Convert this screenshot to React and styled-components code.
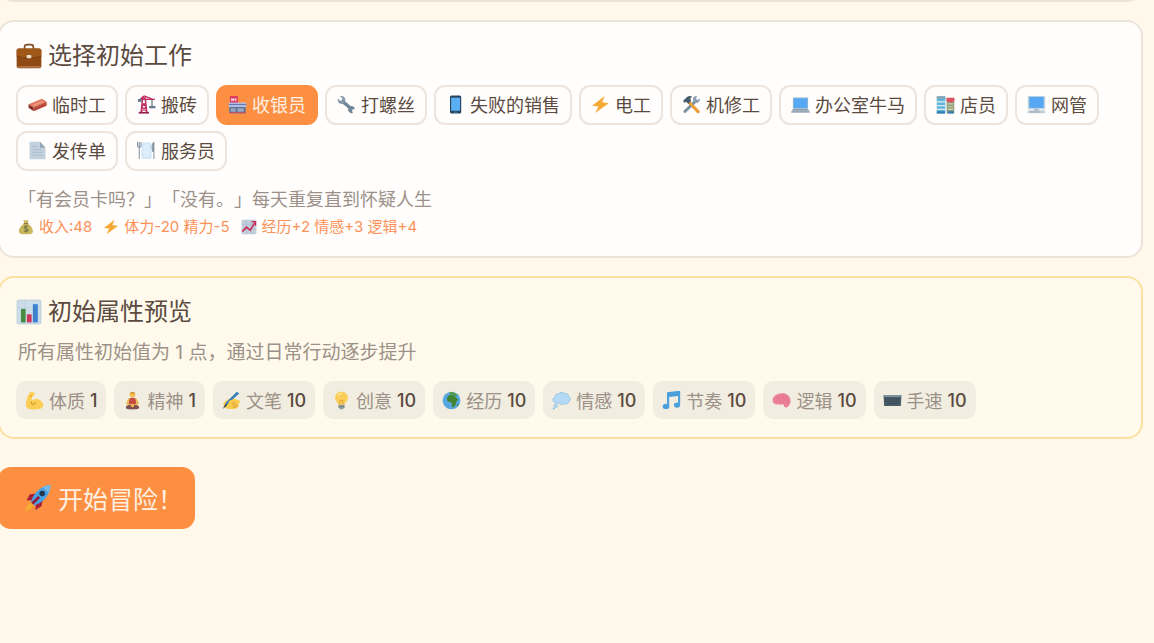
import React, { useState } from "react";
import styled, { createGlobalStyle } from "styled-components";

// every drawing sits on a 20 x 20 grid
const icons = {
    briefcase: (
        <>
            <path d="M6.6 5V3.2C6.6 1.9 7.4 1.2 8.6 1.2h2.8c1.2 0 2 .7 2 2V5" fill="none" stroke="#7d4a23" strokeWidth="1.3" />
            <rect x="0.5" y="4.2" width="19" height="15.2" rx="1.6" fill="#8f4a14" />
            <path d="M.5 5.8C.5 4.9 1.2 4.2 2.1 4.2h15.8c.9 0 1.6.7 1.6 1.6v4.4L12 11.4H8L.5 10.2z" fill="#a05818" />
            <path d="M.5 10.3 8 11.5h4l7.5-1.2" fill="none" stroke="#7c4012" strokeWidth=".6" />
            <rect x="8.2" y="9.3" width="3.6" height="2.4" rx=".5" fill="#e9dccb" />
            <path d="M1 18.4h18" stroke="#c98d62" strokeWidth=".8" />
        </>
    ),
    brick: (
        <>
            <path d="M.6 9.8 14.6 4 19.6 7.2 6 13.2z" fill="#e0785f" />
            <path d="M.6 9.8 6 13.2V17.2L.6 13.4z" fill="#8c2f2a" />
            <path d="M6 13.2 19.6 7.2v4L6 17.2z" fill="#b9483a" />
            <path d="M4.6 10.2 14.4 6.2l2 1.2-9.8 4.2z" fill="#ee9a80" />
        </>
    ),
    crane: (
        <>
            <path d="M4.2 18.6 6 3h2.6l1.8 15.6M5.4 8.4l4 3.6M9.2 8.4 5 12M5 12.8l5.2 4.4M9.8 12.8l-5.4 4.4M3.4 4.6h15.4M7.4 1l9.2 3.6M7.4 1 3.4 4.6" fill="none" stroke="#c22e62" strokeWidth="1.5" />
            <rect x="1.8" y="17.8" width="10.8" height="1.8" fill="#8f2550" />
            <path d="M15.8 5v7" stroke="#526476" strokeWidth="1.2" />
            <rect x="12.8" y="11.6" width="6.6" height="2.4" fill="#66798a" />
            <path d="M1 4.2h4v3H1z" fill="#66798a" />
        </>
    ),
    store: (
        <>
            <rect x="2" y="1" width="8.4" height="8" rx=".6" fill="#df3a62" />
            <path d="M4 3.4v3M4 5h2.2M8.2 3.4v3M6.2 3.4v3" stroke="#fff" strokeWidth="1" />
            <path d="M1.4 9h17.2v10.4H1.4z" fill="#5f7192" />
            <path d="M.8 8h18.4v4.6H.8z" fill="#b9c8ea" />
            <path d="M.8 10h18.4" stroke="#6577b4" strokeWidth="1.4" />
            <path d="M3 14h5v3.6H3zM10 14h6.6v3.6H10z" fill="#96a9c4" />
            <path d="M1.4 18.4h17.2" stroke="#cf4c63" strokeWidth="1" />
        </>
    ),
    wrench: (
        <>
            <path d="M5.4 6.4 14.8 14.2" stroke="#74889a" strokeWidth="3.6" />
            <path d="M3.2 1.2 5.8 3.6 5.2 5.6 3.2 6 .8 3.8C.2 6.4 1.4 8.6 3.6 9.2c2.6.7 5.4-1.4 5.2-4.2C8.7 2.4 6 .4 3.2 1.2z" fill="#8497a8" />
            <path d="M18.9 14.6 16.6 15.2 15.8 16.6 16.8 18.9C14.4 19.6 12 18.2 11.6 15.8c-.3-2.2 1.4-4.2 3.6-4.2 1.8 0 3.3 1.2 3.7 3z" fill="#74889a" />
        </>
    ),
    phone: (
        <>
            <rect x="4.2" y=".6" width="11.8" height="18.8" rx="1.6" fill="#26445f" />
            <rect x="5.4" y="2.8" width="9.4" height="13.8" fill="#5aaef3" />
            <path d="M8.4 18.1h3.4" stroke="#7396b5" strokeWidth=".8" />
        </>
    ),
    bolt: <path d="M14.4 1 1.2 11.2l6.6.8L4.4 19 18.8 8.6l-7-1z" fill="#f6a935" />,
    tools: (
        <>
            <path d="M7.2 7.4 17 17.4" stroke="#e6922d" strokeWidth="3.4" strokeLinecap="round" />
            <path d="M14.6 6.2 3 17.4" stroke="#7b8fa2" strokeWidth="3" strokeLinecap="round" />
            <path d="M9 9.2 16.8 17.2" stroke="#f0a03a" strokeWidth="2.6" strokeLinecap="round" />
            <path d="M1 6.4 5.6 1.8C7.4.6 9.4.8 10.8 2L8.6 3.4l1 2.8-2.8 3L4.4 7 2.8 8.2z" fill="#455a6b" />
            <path d="M18.8 3.6 16.4 5.2 14.6 3.8 15.8 1.2C13.4.6 11.4 2.2 11.4 4.6c0 2.2 1.8 4 4 3.8 2.4-.2 3.8-2.4 3.4-4.8z" fill="#8fa1b2" />
        </>
    ),
    laptop: (
        <>
            <rect x="2" y="2.6" width="16" height="11.8" rx="1" fill="#8fb4d6" />
            <rect x="3" y="3.6" width="14" height="10" fill="#56a8f2" />
            <path d="M2 14.2h16l1.8 4H.2z" fill="#a7b5c2" />
            <path d="M3 15.6h14" stroke="#8293a3" strokeWidth="1" />
            <path d="M.2 18h19.6" stroke="#8797a6" strokeWidth=".9" />
        </>
    ),
    mall: (
        <>
            <rect x=".8" y="1.4" width="9" height="18" fill="#62b5da" />
            <path d="M.8 1.4h9v2.4h-9z" fill="#87a5b0" />
            <path d="M.8 7.2h9M.8 11.2h9M.8 15.2h9" stroke="#d6edf4" strokeWidth="1.2" />
            <rect x="11.2" y="3.4" width="8" height="16" fill="#8f9c82" />
            <path d="M11 3h8.4v3.4l-4.2 1.8L11 6.4z" fill="#de5162" />
            <path d="M12.4 9.4h5.6M12.4 12.4h5.6M12.4 15.2h5.6" stroke="#d8d5a8" strokeWidth="1.2" />
            <path d="M.8 17h8.6v2.6H.8zM12.4 17.2h6.4v2.4h-6.4z" fill="#337eb8" />
        </>
    ),
    desktop: (
        <>
            <rect x=".8" y="1" width="18.4" height="14" rx=".8" fill="#c3d2df" />
            <rect x="2.4" y="2" width="15.2" height="11.6" fill="#56a8f2" />
            <path d="M7.6 15h4.8l.6 1.6H7z" fill="#91a3b3" />
            <path d="M1.4 16h17.2l1 3.2H.4z" fill="#c3ced7" />
            <path d="M3.4 17.8h10" stroke="#8b9cac" strokeWidth=".8" />
        </>
    ),
    page: (
        <>
            <path d="M1.6.8h11L18.4 7v12.2H1.6z" fill="#c2d1dd" />
            <path d="M12.6.8 18.4 7h-5.8z" fill="#91a6b7" />
            <path d="M4.4 6h5.4M4.4 9h11M4.4 12h11M4.4 15h11" stroke="#adbfcc" strokeWidth="1" />
        </>
    ),
    plate: (
        <>
            <rect x="4.8" y="1.6" width="10.4" height="17.4" rx="2" fill="#d0e6f8" />
            <rect x="6.8" y="3.6" width="6.4" height="13.2" rx="1.6" fill="#deeffb" />
            <path d="M2.4 1v18M.6 1v4.4c0 1.4 3.6 1.4 3.6 0V1" fill="none" stroke="#8595a3" strokeWidth="1.1" />
            <path d="M17.8 19V1.6c-1.8 1-2.2 5.4-1.4 9.2h1.4" fill="#8595a3" stroke="#8595a3" strokeWidth="1.1" />
        </>
    ),
    money: (
        <>
            <path d="M6.6 1.2c2 .8 4 .8 6.4 0l-1 4.4c3.6 2 6.6 6 6.6 9.6 0 3-2 4-8.8 4S1.2 18.2 1.2 15.2C1.2 11.6 4.4 7.4 8 5.6z" fill="#c9b65f" />
            <path d="M7 5.8h6" stroke="#8e7a37" strokeWidth="1.4" />
            <path d="M12.6 9.6c-2-1.6-5-.8-5 .9 0 2.2 5 1.2 5 3.4 0 1.8-3.2 2.3-5.2.7M10 7.8v9" fill="none" stroke="#6f7442" strokeWidth="1.3" />
        </>
    ),
    growth: (
        <>
            <rect x=".8" y=".8" width="18.4" height="18.4" rx="1" fill="#c2cedb" />
            <path d="M1 6.6h18M1 12.8h18M6.8 1v18M13 1v18" stroke="#a7b7c7" strokeWidth=".7" />
            <path d="m1.6 15.8 5.2-5.6 4.6 3.8L18 3.6" fill="none" stroke="#c72f5b" strokeWidth="2" />
            <path d="M13.2 3.4h5v5" fill="none" stroke="#c72f5b" strokeWidth="1.6" />
        </>
    ),
    chart: (
        <>
            <rect x=".8" y=".8" width="18.4" height="18.4" rx="1" fill="#cbdde9" stroke="#b5cbd9" strokeWidth=".6" />
            <path d="M1 6.6h18M1 12.6h18M6.6 1v18M13.2 1v18" stroke="#bdd0de" strokeWidth=".5" />
            <rect x="3.8" y="7.6" width="3.6" height="10.4" fill="#498b40" />
            <rect x="8.4" y="11.8" width="3.6" height="6.2" fill="#cc3658" />
            <rect x="13" y="4" width="3.8" height="14" fill="#3c82cf" />
        </>
    ),
    biceps: (
        <>
            <path d="M5.6 1.6C7.2.6 9.6 1.2 10 3c.4 1.7-.8 2.8-2.4 2.8l-.8 4.8c1.6-2.2 4.6-3.2 7.4-2 3.4 1.4 5.2 4.4 5 7.2-.4 2.6-4.4 3.6-9.8 3.6C4.4 19.4 1 18 1 15.2 1 10.6 2.6 4 5.6 1.6z" fill="#fbcf56" />
            <path d="M6.8 10.6c-.4 1.6 0 2.8 1 3.6M12 12.6c-1.8-.2-3.2.6-4 2M7.6 5.8 5.4 5" fill="none" stroke="#d99a2b" strokeWidth="1.1" />
        </>
    ),
    lotus: (
        <>
            <circle cx="10" cy="3.8" r="3" fill="#f6bf4e" />
            <path d="M7.2 3C7.4.6 12.6.6 12.8 3c-1.6-.8-4-.8-5.6 0z" fill="#b98535" />
            <path d="M6.4 7.8c2-.9 5.2-.9 7.2 0l.6 6.4H5.8z" fill="#c44a42" />
            <path d="M6.6 8 4.2 13l3 2M13.4 8l2.4 5-3 2" fill="none" stroke="#f0b64b" strokeWidth="1.7" />
            <path d="M3 17.2c0-2 3-2.8 7-2.8s7 .8 7 2.8-2.4 2.2-7 2.2-7-.2-7-2.2z" fill="#7e5150" />
            <circle cx="10" cy="15.2" r="1.8" fill="#f0b64b" />
        </>
    ),
    writing: (
        <>
            <path d="M2 12.2C5 8.8 9.4 7 13 8.2l5.4 2c1.4.8 1 2.4-.6 2.4h-3.2c3 .2 3.4 1.2 2.8 2.2.6 1.4-.2 2.2-1.4 2.4-.8 1.6-2.6 1.8-5.8 1.8-4 0-7.2-1-8.8-3z" fill="#fbcb4c" />
            <path d="M15.6.8 18.2 2.6 8.4 11.4 2.4 17.6 4.2 12z" fill="#3d80b8" />
            <path d="M3.8 13.6 5.4 14.8.8 19z" fill="#263b52" />
            <path d="M7.6 10.4c2.4-1.6 5.4-1.6 8-.4l3 1.2c.8 1-.2 1.6-1.2 1.4h-2.8c3 .2 3.4 1.2 2.8 2.2.6 1.4-.2 2.2-1.4 2.4-1.6 1.4-5 1.6-7.6.4-1.8-1.8-2.2-5.2-.8-7.2z" fill="#fbcb4c" />
            <path d="M14.6 12.6h-4.2M16.8 14.8h-5.6M15.4 17h-4" stroke="#cf9430" strokeWidth=".8" />
        </>
    ),
    bulb: (
        <>
            <path d="M10 .8c-4 0-6.8 2.8-6.8 6.4 0 3.4 3 4.6 3.6 7.6h6.4c.6-3 3.6-4.2 3.6-7.6C16.8 3.6 14 .8 10 .8z" fill="#fbce5c" />
            <path d="M8.4 14V9.4l1.6 1 1.6-1V14" fill="none" stroke="#e39c35" strokeWidth=".9" />
            <path d="M6.8 4.6c.8-1.2 2-1.8 3.4-1.8" fill="none" stroke="#fff0b4" strokeWidth="1.2" />
            <path d="M6.8 14.6h6.4v2.6l-1.6 2H8.4l-1.6-2z" fill="#91a09e" />
            <path d="M6.8 16.4h6.4" stroke="#657377" strokeWidth=".7" />
        </>
    ),
    globe: (
        <>
            <circle cx="10" cy="10" r="9.3" fill="#58a7e2" />
            <path d="M6.2 5.6C8 3.8 10.6 4 12.8 4.8l3 3.4 1.8.8-2.6 2.2-.6 3.2-2.4 3-1.6-1-.4-4.6-3.4-.6C5 10.4 4.8 7.4 6.2 5.6z" fill="#42852f" />
            <path d="M8 1.2c2.8-.8 6.2.4 8.6 3.4l-2.2.8-3-1.6-2.6.2z" fill="#569c3e" />
            <path d="m16.4 13.6 1.2-.6-.8 2.4-1.2.6z" fill="#42852f" />
        </>
    ),
    thought: (
        <>
            <path d="M4.4 12.4C1.8 12.4.8 10.8 1 9.2c0-1.6 1.2-2.6 2.4-2.8C3 4 5.2 2.4 7.4 3 8.6 1 12 .8 13.4 2.8c2.4-.6 4.6 1 4.2 3.2 2.2.8 2.4 4 .2 5-.2 2.4-3.4 3.6-5 2-1.8 1.8-4.4 1.4-5.4-.2-.8.4-2 .2-3-.4z" fill="#b4daf5" stroke="#82b8e1" strokeWidth=".7" />
            <circle cx="4" cy="15.6" r="1.9" fill="#b4daf5" stroke="#82b8e1" strokeWidth=".6" />
            <circle cx="1.8" cy="18.4" r="1" fill="#82b8e1" />
        </>
    ),
    music: (
        <>
            <path d="M6.4 15.4V2.4L18 .9v13.2" fill="none" stroke="#4ba0dc" strokeWidth="2.2" />
            <path d="M5.4 2.6 19 1v4L5.4 6.6z" fill="#4ba0dc" />
            <ellipse cx="4.2" cy="16.2" rx="3.5" ry="2.8" fill="#4ba0dc" />
            <ellipse cx="15.8" cy="14.8" rx="3.3" ry="2.7" fill="#4ba0dc" />
        </>
    ),
    brain: (
        <>
            <path d="M10.4 2.4c4.2-.4 8 2.4 9 6.4.6 3-.6 5.8-2 6.8-.8 2-2.8 2.2-4.2 1.2l-1.6-3c-2 .8-3.8 1-5.4.2C2.8 14.6.4 12.6.6 9.6.8 5.6 5.2 2.6 10.4 2.4z" fill="#ec8099" />
            <path d="M4 7.6c2-2 4-.4 3.6 1.2M9.4 4.4c2.2.2 2.6 2.2 1.6 3.6M13.6 5c1.6 1 1.8 2.8.6 4M3.8 11.6c1.6 0 2.6-.6 3.2-1.4M9.6 11.8c1.6.2 3.6-.4 4-1.8M16.6 9.4c.8 1.6 0 3-1.4 3.4" fill="none" stroke="#d9688a" strokeWidth=".7" />
        </>
    ),
    keyboard: (
        <>
            <path d="M.6 4.4h18.8l-.6 11.4H1.2z" fill="#4a5c68" />
            <path d="M.6 4.4h18.8v1.8H.6z" fill="#8295a1" />
            <path d="M2.4 8.4h15.2M2.4 10.8h15.2M4.8 13.2h10.4" stroke="#2d404d" strokeWidth="1.2" strokeDasharray="1.5 .7" />
        </>
    ),
    rocket: (
        <>
            <path d="M9.2 6.8 4.2 7.4 1.8 11.6l5 .2zM13.4 10.8l-.8 5-4.4 2.8.2-5.2z" fill="#a32139" />
            <path d="M19 .8C14.4 1 9.8 3.6 6.6 9L4.8 12.6l2.8 2.8 3.6-1.8C16.4 10.4 19 5.6 19 .8z" fill="#4ba0e4" />
            <path d="M19 .8c-2 .1-3.8.6-5.6 1.4l4.2 4.2c.9-1.8 1.3-3.6 1.4-5.6z" fill="#78b9e6" />
            <circle cx="13" cy="6.8" r="2" fill="#20374e" />
            <path d="M10.8 9.2 6 14" stroke="#8f1c35" strokeWidth="2" />
            <path d="M4.6 13.4c-2 .8-3.2 3-3.6 5.8 2.8-.4 4.8-1.6 5.6-3.8z" fill="#f5ae32" />
        </>
    ),
};

const jobs = [
    { icon: "brick", name: "临时工" },
    { icon: "crane", name: "搬砖" },
    { icon: "store", name: "收银员" },
    { icon: "wrench", name: "打螺丝" },
    { icon: "phone", name: "失败的销售" },
    { icon: "bolt", name: "电工" },
    { icon: "tools", name: "机修工" },
    { icon: "laptop", name: "办公室牛马" },
    { icon: "mall", name: "店员" },
    { icon: "desktop", name: "网管" },
    { icon: "page", name: "发传单" },
    { icon: "plate", name: "服务员" },
];

const effects = [
    { icon: "money", text: "收入:48" },
    { icon: "bolt", text: "体力-20 精力-5" },
    { icon: "growth", text: "经历+2 情感+3 逻辑+4" },
];

const attributes = [
    { icon: "biceps", name: "体质", value: 1 },
    { icon: "lotus", name: "精神", value: 1 },
    { icon: "writing", name: "文笔", value: 10 },
    { icon: "bulb", name: "创意", value: 10 },
    { icon: "globe", name: "经历", value: 10 },
    { icon: "thought", name: "情感", value: 10 },
    { icon: "music", name: "节奏", value: 10 },
    { icon: "brain", name: "逻辑", value: 10 },
    { icon: "keyboard", name: "手速", value: 10 },
];

const Icon = ({ name, size = 19 }) => (
    <IconSvg viewBox="0 0 20 20" $size={size} aria-hidden="true">
        {icons[name]}
    </IconSvg>
);

const App = () => {
    const [selected, setSelected] = useState("收银员");

    return (
        <>
            <GlobalStyle />
            <Page>
                <PreviousCard />
                <Card>
                    <Title>
                        <Icon name="briefcase" size={26} />
                        选择初始工作
                    </Title>
                    <JobList>
                        {jobs.map((job) => (
                            <JobButton
                                key={job.name}
                                type="button"
                                $active={job.name === selected}
                                aria-pressed={job.name === selected}
                                onClick={() => setSelected(job.name)}
                            >
                                <Icon name={job.icon} />
                                {job.name}
                            </JobButton>
                        ))}
                    </JobList>
                    <JobInfo>
                        <JobQuote>「有会员卡吗？」「没有。」每天重复直到怀疑人生</JobQuote>
                        <Effects>
                            {effects.map((effect) => (
                                <Effect key={effect.icon}>
                                    <Icon name={effect.icon} size={16} />
                                    {effect.text}
                                </Effect>
                            ))}
                        </Effects>
                    </JobInfo>
                </Card>
                <Card $highlight>
                    <Title>
                        <Icon name="chart" size={26} />
                        初始属性预览
                    </Title>
                    <Hint>所有属性初始值为 1 点，通过日常行动逐步提升</Hint>
                    <AttributeList>
                        {attributes.map((attribute) => (
                            <Attribute key={attribute.name}>
                                <Icon name={attribute.icon} />
                                {attribute.name}
                                <AttributeValue>{attribute.value}</AttributeValue>
                            </Attribute>
                        ))}
                    </AttributeList>
                </Card>
                <StartButton type="button">
                    <Icon name="rocket" size={28} />
                    开始冒险！
                </StartButton>
            </Page>
        </>
    );
};

// Styled Components
const GlobalStyle = createGlobalStyle`
    * {
        box-sizing: border-box;
    }

    body {
        margin: 0;
        background: #fff8eb;
        color: #5b4a40;
        font-family: Inter, "Noto Sans CJK SC", sans-serif;
        text-spacing-trim: space-all;
        overflow-x: hidden;
    }

    button {
        font-family: inherit;
        cursor: pointer;
    }
`;

const IconSvg = styled.svg`
    width: ${(props) => props.$size}px;
    height: ${(props) => props.$size}px;
    flex-shrink: 0;
`;

const Page = styled.main`
    margin-left: -2px;
    padding-right: 11px;
`;

const Card = styled.section`
    margin-bottom: 18px;
    padding: 16px;
    background: ${(props) => (props.$highlight ? "#fffaeb" : "#fffefd")};
    border: 2px solid ${(props) => (props.$highlight ? "#f9e1a0" : "#ece4da")};
    border-radius: 16px;
`;

// the card above, scrolled away except for its lower edge
const PreviousCard = styled(Card)`
    height: 36px;
    margin-top: -34px;
`;

const Title = styled.h2`
    display: flex;
    align-items: center;
    gap: 6px;
    margin: 0;
    font-size: 24px;
    font-weight: 400;
    line-height: 36px;
`;

const JobList = styled.div`
    display: flex;
    flex-wrap: wrap;
    gap: 6px 7px;
    margin-top: 11px;
`;

const JobButton = styled.button`
    display: flex;
    align-items: center;
    gap: 5px;
    height: 40px;
    padding: 0 10px 2px;
    background: ${(props) => (props.$active ? "#fd8f42" : "#fffefd")};
    border: 2px solid ${(props) => (props.$active ? "#fd8f42" : "#ece4dd")};
    border-radius: 11px;
    color: ${(props) => (props.$active ? "#fff0e2" : "#5b4a40")};
    font-size: 18px;
`;

const JobInfo = styled.div`
    margin-top: 15px;
    padding-left: 2px;
`;

const JobQuote = styled.p`
    margin: 0;
    color: #9c9088;
    font-size: 18px;
    line-height: 27px;
`;

const Effects = styled.div`
    display: flex;
    gap: 11px;
    color: #fb9258;
    font-size: 15px;
    line-height: 27px;
`;

const Effect = styled.span`
    display: flex;
    align-items: center;
    gap: 5px;
`;

const Hint = styled.p`
    margin: 9px 0 0;
    padding-left: 2px;
    color: #9c9088;
    font-size: 19px;
    line-height: 28px;
`;

const AttributeList = styled.div`
    display: flex;
    flex-wrap: wrap;
    gap: 8px;
    margin: 14px 0 2px;
`;

const Attribute = styled.span`
    display: flex;
    align-items: center;
    gap: 5px;
    height: 38px;
    padding: 0 9px;
    background: #f1ede0;
    border-radius: 10px;
    color: #9c9088;
    font-size: 18px;
`;

const AttributeValue = styled.strong`
    color: #5b4a40;
    font-weight: 500;
`;

const StartButton = styled.button`
    display: flex;
    align-items: center;
    gap: 6px;
    height: 62px;
    margin-top: 28px;
    padding: 0 12px 0 26px;
    background: #fd8f42;
    border: none;
    border-radius: 13px;
    color: #fff0e2;
    font-size: 25px;
`;

export default App;
